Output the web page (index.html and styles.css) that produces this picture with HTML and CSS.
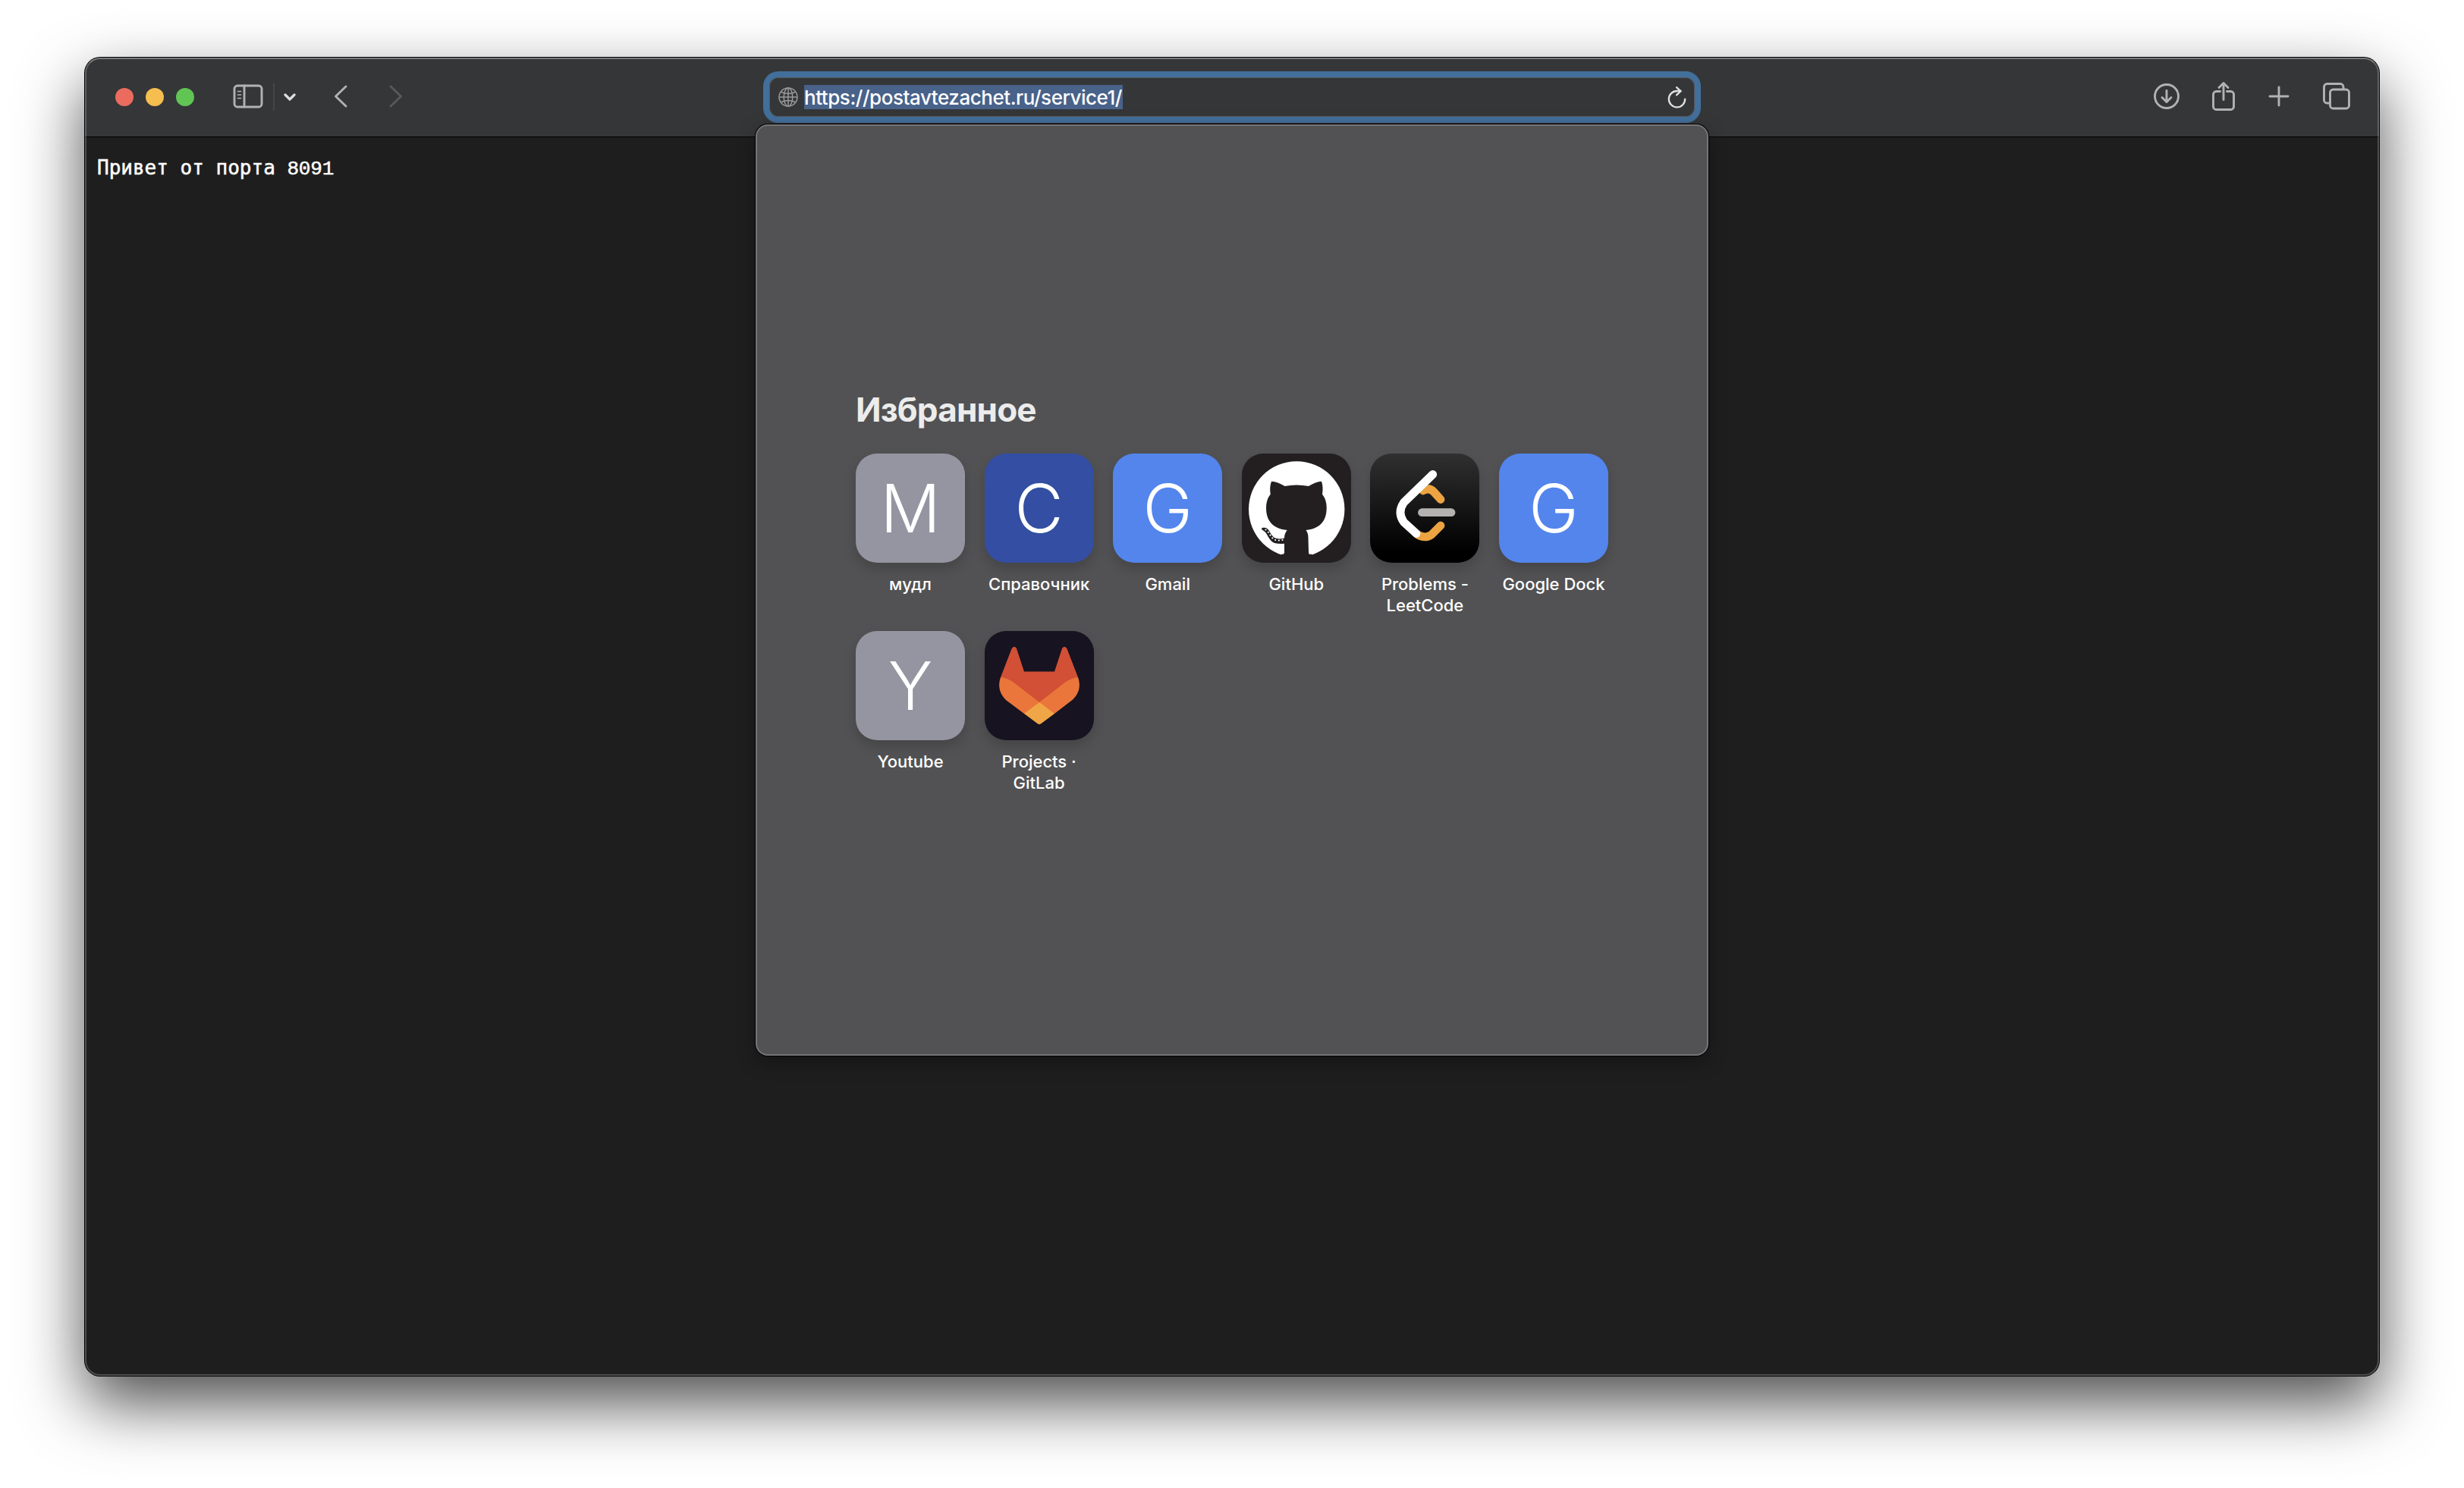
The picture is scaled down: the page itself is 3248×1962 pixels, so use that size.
FILE: index.html
```html
<!DOCTYPE html>
<html lang="ru">
<head>
<meta charset="utf-8">
<title>postavtezachet.ru/service1</title>
<link rel="stylesheet" href="styles.css">
</head>
<body>
<div class="window">
  <header class="toolbar">
    <div class="lights"><i class="light red"></i><i class="light yellow"></i><i class="light green"></i></div>
    <svg class="icon sidebar" width="40" height="32" viewBox="0 0 40 32"><rect x="2" y="2" width="36" height="28" rx="4"/><path d="M15 2v28"/><path class="thin" d="M6.500 9.500h4M6.500 14h4M6.500 18.500h4"/></svg>
    <i class="divider"></i>
    <svg class="icon menu" width="16" height="12" viewBox="0 0 16 12"><path d="M2 3l6 6 6-6"/></svg>
    <svg class="icon back" width="20" height="32" viewBox="0 0 20 32"><path d="M17 3L3.500 16 17 29"/></svg>
    <svg class="icon forward" width="20" height="32" viewBox="0 0 20 32"><path d="M3 3l13.500 13L3 29"/></svg>
    <div class="address">
      <svg class="globe" width="26" height="26" viewBox="0 0 26 26"><circle cx="13" cy="13" r="12"/><ellipse cx="13" cy="13" rx="5.800" ry="12"/><path d="M13 1v24M1 13h24M3.500 6.200q9.500 4.500 19 0M3.500 19.800q9.500-4.500 19 0"/></svg>
      <span class="url"><span class="url-text">https://postavtezachet.ru/service1/</span></span>
      <svg class="reload" width="26" height="30" viewBox="0 0 26 30"><path d="M23.200 17.600A10.700 10.700 0 1 1 12.500 7h5"/><path d="M12 2.200l5.500 4.900-5.500 5.200"/></svg>
    </div>
    <div class="actions">
      <svg class="icon" width="36" height="36" viewBox="0 0 36 36"><circle cx="18" cy="18" r="15.500"/><path d="M18 10.500v14.500M12 19.500l6 6 6-6"/></svg>
      <svg class="icon share" width="32" height="40" viewBox="0 0 32 40"><path d="M11.500 13.500H6.500a4 4 0 0 0-4 4v16a4 4 0 0 0 4 4h19a4 4 0 0 0 4-4v-16a4 4 0 0 0-4-4h-5M16 24.500V3M10 8.500L16 2.500l6 6"/></svg>
      <svg class="icon plus" width="28" height="28" viewBox="0 0 28 28"><path d="M14 2v24M2 14h24"/></svg>
      <svg class="icon tabs" width="36" height="36" viewBox="0 0 36 36"><path d="M8.500 27H5.500a4 4 0 0 1-4-4V5.500a4 4 0 0 1 4-4H23a4 4 0 0 1 4 4V8"/><rect x="9.500" y="9" width="25" height="25" rx="4"/></svg>
    </div>
  </header>
  <main class="page">Привет от порта <span class="port">8091</span></main>
  <section class="popup">
    <h1 class="title">Избранное</h1>
    <div class="grid">
      <div class="site"><div class="tile gray">M</div><p class="label">мудл</p></div>
      <div class="site"><div class="tile navy">С</div><p class="label">Справочник</p></div>
      <div class="site"><div class="tile blue">G</div><p class="label">Gmail</p></div>
      <div class="site"><div class="tile github"><svg width="144" height="144" viewBox="0 0 144 144"><circle cx="72.200" cy="73.500" r="63.200" fill="#fff"/><path fill="#231f20" d="M39 36.700q8 .3 17.500 6.300 15.500-3 31.500 0 9.500-6 17-6.300 2.500 7.500 1 17 5.700 7 5.700 18C111.700 90 102 99 84.500 101q3 4 3 10l.5 19q0 4 4 2.500L95 144H49l3.500-11.500q3.500 1 3.500-2.500v-11.300q-7 .6-13-.7C36 115 34 107 31 103.700c-2-2-5-3-5-4.500 0-2 5-1.700 7-.5 4 3 5.500 9.500 10 12.300 4 2 8 1.700 13 .5q0-6 3.700-10.500C42 99 32 90 32 71.700q0-11 5.700-18-1.500-9.500 1.300-17z"/><path d="M31.500 100.500C37 104 38 113 46 114.500q5 .5 11-1.500" fill="none" stroke="#fff" stroke-width="2.200" stroke-linecap="round" stroke-dasharray="0 4.700"/></svg></div><p class="label">GitHub</p></div>
      <div class="site"><div class="tile leet"><svg width="144" height="144" viewBox="0 0 144 144" fill="none" stroke-width="10.800" stroke-linecap="round" stroke-linejoin="round"><path stroke="#eca341" d="M70 49q8-5 14.500 2l8.500 9.500M62 106.500q10 6.500 19 0.500L93 95"/><path stroke="#fff" d="M82.700 27.500L44.500 64.500q-9 13.200 0 26L61 105.500"/><path stroke="#b3b2b0" d="M68.500 77.700H107"/></svg></div><p class="label">Problems - LeetCode</p></div>
      <div class="site"><div class="tile blue">G</div><p class="label">Google Dock</p></div>
      <div class="site"><div class="tile gray">Y</div><p class="label">Youtube</p></div>
      <div class="site"><div class="tile gitlab"><svg width="144" height="144" viewBox="0 0 144 144"><path fill="#d25035" d="M21 61L35.500 23.500q3-5 6.500-.5L52 53.500h40L102 23q3.500-4.500 6.500.5L123 61 72 112z"/><path fill="#eb763b" d="M21 61q9.500 1 18 7.500L72 94l33-25.500q8.500-6.500 18-7.500 6 17-7 29.500L92 109H52L28 91Q15 78 21 61z"/><path fill="#f0a646" d="M72 94l20 15-17.500 13q-2.500 2-5 0L52 109z"/></svg></div><p class="label">Projects · GitLab</p></div>
    </div>
  </section>
</div>
</body>
</html>
```
FILE: styles.css
```css
* { box-sizing: border-box; }
body {
  margin: 0;
  width: 3248px;
  height: 1962px;
  padding: 76px 112px 0;
  overflow: hidden;
  background: #fff;
  font-family: Inter, "Liberation Sans", sans-serif;
}
.window {
  position: relative;
  display: flex;
  flex-direction: column;
  height: 1738px;
  border-radius: 20px;
  background: #1e1e1e;
  box-shadow: 0 0 0 1px #000, 0 36px 84px rgba(0, 0, 0, .7);
}
/* light rim drawn over the window edge */
.window::after {
  content: "";
  position: absolute;
  inset: 0;
  border: 2px solid rgba(255, 255, 255, .22);
  border-top-color: rgba(255, 255, 255, .34);
  border-radius: 20px;
  pointer-events: none;
}
.toolbar {
  display: flex;
  align-items: center;
  height: 105px;
  padding: 0 38px 0 40px;
  border-bottom: 1px solid #000;
  border-radius: 20px 20px 0 0;
  background: #353638;
}
.lights { display: flex; gap: 16px; }
.light { width: 24px; height: 24px; border-radius: 50%; }
.red { background: #ec6b5f; }
.yellow { background: #f5be4f; }
.green { background: #61c554; }
.icon {
  flex: none;
  fill: none;
  stroke: #b1b2b4;
  stroke-width: 2.900;
  stroke-linecap: round;
  stroke-linejoin: round;
}
.thin { stroke-width: 1.700; }
.sidebar { margin: -3px 0 0 51px; }
.divider { width: 2px; height: 36px; margin-left: 13px; background: #454648; }
.menu { margin-left: 12px; stroke: #dedee0; stroke-width: 3.200; }
.back { margin: -2px 0 0 49px; }
.forward { margin: -2px 0 0 53px; stroke: #58595b; }
.address {
  display: flex;
  align-items: center;
  width: 1236px;
  height: 68px;
  margin-left: 474px;
  padding: 0 10px 0 12px;
  border: 8px solid #436f9b;
  border-radius: 20px;
  background: #353638;
  box-shadow: inset 0 0 0 1px #55585c;
}
.globe { fill: none; stroke: #98999b; stroke-width: 1.500; }
.url {
  display: flex;
  align-items: center;
  width: 420px;
  height: 32px;
  margin-left: 8px;
  background: #48628a;
  color: #fff;
  font-size: 26px;
  font-weight: 500;
  white-space: nowrap;
}
.url-text { letter-spacing: -.46px; }
.reload {
  margin-left: auto;
  fill: none;
  stroke: #dfdfe0;
  stroke-width: 2.300;
  stroke-linecap: round;
  stroke-linejoin: round;
}
.actions { display: flex; align-items: center; margin: -2px 0 0 auto; }
.share { margin-left: 41px; }
.plus { margin-left: 43px; }
.tabs { margin-left: 44px; }
.page {
  flex: 1;
  padding: 24px 16px;
  color: #fff;
  font: 26px/32px "DejaVu Sans Mono", monospace;
  -webkit-text-stroke: .5px #fff;
}
.port { font-family: "Liberation Mono", monospace; letter-spacing: -.2px; }
.popup {
  position: absolute;
  top: 88px;
  left: 884px;
  width: 1256px;
  height: 1228px;
  padding: 347px 130px 0;
  border: 2px solid #757577;
  border-radius: 16px;
  background: #525254;
  box-shadow: 0 0 0 1px #000, 0 8px 24px rgba(0, 0, 0, .35);
}
.title {
  margin: 0 0 31px;
  color: #ececec;
  font-size: 44px;
  line-height: 54px;
  font-weight: 700;
  letter-spacing: -.8px;
}
.grid {
  display: grid;
  grid-template-columns: repeat(6, 144px);
  grid-auto-rows: 234px;
  justify-content: space-between;
  width: 992px;
}
.tile {
  display: flex;
  align-items: center;
  justify-content: center;
  height: 144px;
  border-radius: 28px;
  overflow: hidden;
  color: #fff;
  font-size: 88px;
  line-height: 144px;
  font-weight: 300;
  box-shadow: 0 8px 16px rgba(0, 0, 0, .16);
}
.gray { background: #9495a1; }
.navy { background: #334ea2; }
.blue { background: #5385ed; }
.github { background: #231f20; }
.leet { background: linear-gradient(#303030, #000 90%); }
.gitlab { background: #171321; }
.label {
  margin: 14px -8px 0;
  color: #fff;
  font-size: 22px;
  line-height: 28px;
  font-weight: 500;
  text-align: center;
}
```
